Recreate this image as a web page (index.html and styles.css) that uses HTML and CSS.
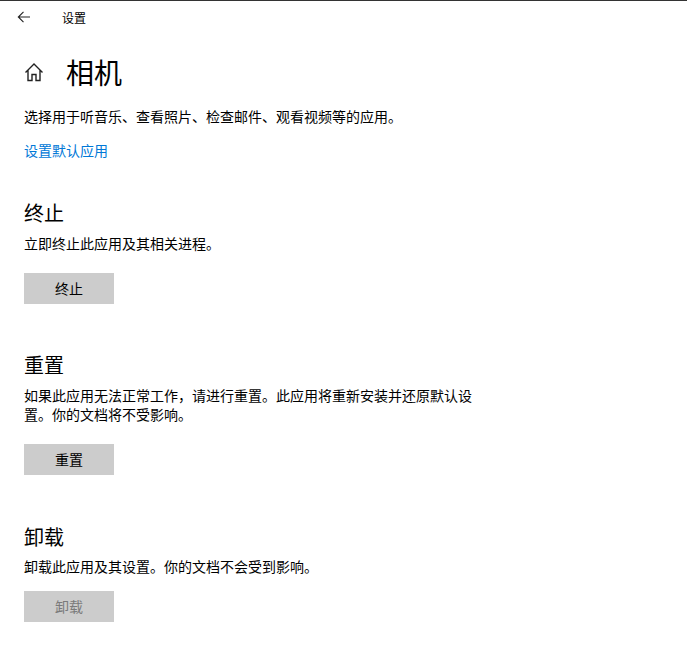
FILE: index.html
```html
<!DOCTYPE html>
<html lang="zh-CN">
<head>
    <meta charset="UTF-8">
    <title>设置</title>
    <link rel="stylesheet" href="styles.css">
</head>
<body>
    <div class="title-bar">
        <svg class="back-icon" width="16" height="16" viewBox="0 0 16 16"><path d="M14 8H2.5M7.5 2.8L2.3 8l5.2 5.2" fill="none" stroke="#222" stroke-width="1.1"/></svg>
        <span class="title-text">设置</span>
    </div>
    <main class="content">
        <div class="page-head">
            <svg class="home-icon" width="20" height="20" viewBox="0 0 20 20"><path d="M1.500 10.500L10 2l8.500 8.500M4 8.500V18.500H8V12.500H12V18.500H16V8.500" fill="none" stroke="#222" stroke-width="1.4"/></svg>
            <h1 class="page-title">相机</h1>
        </div>
        <p class="text intro">选择用于听音乐、查看照片、检查邮件、观看视频等的应用。</p>
        <a class="link" href="#">设置默认应用</a>

        <section class="section section-stop">
            <h2 class="section-title">终止</h2>
            <p class="text">立即终止此应用及其相关进程。</p>
            <button class="button">终止</button>
        </section>

        <section class="section section-reset">
            <h2 class="section-title">重置</h2>
            <p class="text">如果此应用无法正常工作，请进行重置。此应用将重新安装并还原默认设置。你的文档将不受影响。</p>
            <button class="button">重置</button>
        </section>

        <section class="section section-remove">
            <h2 class="section-title">卸载</h2>
            <p class="text">卸载此应用及其设置。你的文档不会受到影响。</p>
            <button class="button" disabled>卸载</button>
        </section>
    </main>
</body>
</html>
```
FILE: styles.css
```css
* {
    box-sizing: border-box;
}

body {
    margin: 0;
    background-color: #fff;
    color: #000;
    font-family: "Liberation Sans", "Noto Sans CJK SC", sans-serif;
    font-size: 14px;
}

.title-bar {
    display: flex;
    align-items: center;
    height: 33px;
    border-top: 1px solid #333;
    padding-left: 16px;
}

.back-icon {
    margin-right: 30px;
}

.title-text {
    font-size: 12px;
}

.content {
    padding: 0 24px;
}

.page-head {
    display: flex;
    align-items: center;
    height: 46px;
    margin-top: 16px;
}

.home-icon {
    margin-right: 22px;
}

.page-title {
    margin: 0;
    font-size: 28px;
    font-weight: 400;
}

.text {
    max-width: 450px;
    margin: 0;
    font-size: 14px;
    line-height: 19px;
}

.intro {
    margin-top: 13px;
}

.link {
    display: block;
    margin-top: 15px;
    color: #0078d7;
    font-size: 14px;
    line-height: 19px;
    text-decoration: none;
}

.section-stop {
    margin-top: 39px;
}

.section-reset {
    margin-top: 48px;
}

.section-remove {
    margin-top: 49px;
}

.section-title {
    margin: 0 0 7px;
    font-size: 20px;
    font-weight: 400;
    line-height: 28px;
}

.section-remove .section-title {
    margin-bottom: 6px;
}

.button {
    display: block;
    width: 90px;
    height: 31px;
    margin-top: 19px;
    border: none;
    padding: 0 0 2px;
    background-color: #ccc;
    color: #000;
    font-family: inherit;
    font-size: 14px;
}

.section-remove .button {
    margin-top: 14px;
}

.button:disabled {
    color: #7a7a7a;
}
```
